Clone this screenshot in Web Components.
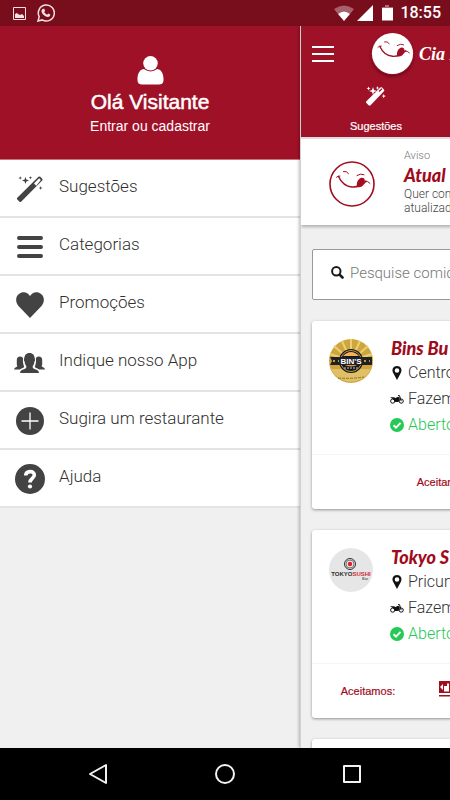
<!DOCTYPE html>
<html lang="pt-BR">
<head>
<meta charset="utf-8">
<meta name="viewport" content="width=device-width, initial-scale=1">
<title>Cia</title>
<style>
  html, body { margin: 0; height: 100%; }
  body { font-family: "Liberation Sans", Arial, sans-serif; background: #f0f0f0; overflow: hidden; }
</style>
</head>
<body>
<delivery-app></delivery-app>

<script>
const LIGHT = 'Roboto, "Liberation Sans", sans-serif';

function define(name, html) {
  const template = document.createElement('template');
  template.innerHTML = html;
  customElements.define(name, class extends HTMLElement {
    constructor() {
      super();
      this.attachShadow({ mode: 'open' }).append(template.content.cloneNode(true));
    }
  });
}

/* Vector icons; the name attribute picks one, the host sets size and colour. */
const ICONS = {
  picture: ['0 0 13 13', '<path fill="none" stroke="currentColor" d="M.5.5h12v12H.5z"/><path fill="currentColor" d="M2 11V7l2-1 1 1 2 1 2-1 2 2v2z"/>'],
  whatsapp: ['0 0 18 18', '<path fill="none" stroke="currentColor" stroke-width="1.5" d="M1 17l1.2-4.3A8 8 0 1 1 5.200 15.900z"/><path fill="currentColor" d="M6.300 4.700l1 .1.8 2.200-.9 1.100c.7 1.300 1.700 2.100 2.900 2.700l1-1.200 2.200 1c.1 1.500-1 2.500-2.400 2.500-3.600-.5-6.100-3.300-6.500-6 .1-1 .8-2.200 1.900-2.400z"/>'],
  wifi: ['0 0 20 16', '<path fill="currentColor" opacity=".35" d="M0 4Q10-3 20 4l-4 5Q10 4 4 9z"/><path fill="currentColor" d="M4 9q6-5 12 0l-6 7z"/>'],
  signal: ['0 0 16 16', '<path fill="currentColor" d="M16 0v16H0z"/>'],
  battery: ['0 0 12 16', '<path fill="currentColor" opacity=".4" d="M4 0h4v2h4v2H1V2h3z"/><path fill="currentColor" d="M1 3h11v12.500H1z"/>'],
  person: ['0 0 27 30', '<circle cx="13.500" cy="7.600" r="7.500" fill="currentColor"/><path fill="currentColor" d="M6.500 13.500q7 5 14 0C25 14 27 19 27 24.500q0 5-5 5H5q-5 0-5-5C0 19 2 14 6.500 13.500z"/>'],
  wand: ['0 0 26 26', '<path fill="currentColor" fill-rule="evenodd" d="M0 22L21.500.8q.9-.8 1.800 0l1.900 1.900q.8.9 0 1.800L4.100 25.700q-.8.700-1.600 0L.1 23.300q-.5-.6-.1-1.300zM17 7.500l2.200 2.200 4.600-5.700-1.700-1.700z"/><path fill="currentColor" d="M8.500 1l.9 2.600 2.600.9-2.600.9L8.500 8l-.9-2.600L5 4.500l2.600-.9zM3.200.2l.5 1.300 1.300.5-1.300.5-.5 1.300-.5-1.300L1.400 2l1.300-.5zM13.500 0l.4 1.300 1.300.5-1.300.5-.4 1.300-.5-1.300-1.300-.5 1.300-.5zM23.600 10l.5 1.500 1.400.5-1.400.5-.5 1.400-.5-1.400-1.400-.5 1.400-.5z"/>'],
  wandfull: ['0 0 20 20', '<path fill="currentColor" d="M.4 15.300L14.300 1.600q.9-.8 1.800 0l1.800 1.800q.8.900 0 1.800L4.600 19.300q-1 .9-2 0l-2.200-2.200q-.9-.9 0-1.800z"/><path stroke="#9f1127" stroke-width="1.200" d="M13 5.500L16 2.800"/><path fill="currentColor" d="M7 1l1 3 3 1-3 1-1 3-1-3-3-1 3-1zM2.500.5l.6 1.300 1.400.6-1.400.7-.6 1.300L2 3.100.6 2.400 2 1.800zM11.500 0l.5 1.400 1.400.5-1.400.6-.5 1.400-.5-1.400L9.600 1.900l1.400-.5zM17.700 8l.6 1.500 1.500.6-1.500.6-.6 1.500-.6-1.500-1.500-.6 1.500-.6z"/>'],
  lines: ['0 0 26 22', '<path stroke="currentColor" stroke-width="4" stroke-linecap="round" d="M2 2h22M2 11h22M2 20h22"/>'],
  bars: ['0 0 22 16', '<path stroke="currentColor" stroke-width="2" d="M0 1h22M0 8h22M0 15h22"/>'],
  heart: ['0 0 28 26', '<path fill="currentColor" d="M14 26L2.500 14C-1.500 9.500-.3 2.500 5 .7 9-.6 12 1 14 4c2-3 5-4.600 9-3.300 5.300 1.800 6.500 8.800 2.500 13.300z"/>'],
  group: ['0 0 31 20', '<path fill="currentColor" d="M6 20q.3-3 4-3.700 2.500-.8 2.500-2.500-1.700-2.300-2-5.200-.8-1-.5-2C10.500 2 12 0 15.500 0S20.500 2 21 6.600q.3 1-.5 2-.3 2.900-2 5.200 0 1.700 2.500 2.500 3.700.7 4 3.700z"/><path fill="currentColor" d="M0 16.500q.1-1.800 2.400-2.500c1.300-.4 1-1.600.4-2V7.500C2.600 5 4 3.600 6.200 3.600c1.600 0 2.600.8 2.900 2-.5 3 .1 5.600 1.100 8.400-1.200 1-3 1.200-4.200 2.500zM31 16.500q-.1-1.800-2.400-2.500c-1.300-.4-1-1.600-.4-2V7.500c.2-2.500-1.200-3.900-3.400-3.900-1.600 0-2.600.8-2.900 2 .5 3-.1 5.600-1.100 8.400 1.200 1 3 1.200 4.200 2.500z"/>'],
  plus: ['0 0 28 28', '<circle cx="14" cy="14" r="14" fill="currentColor"/><path stroke="#fff" stroke-width="1.300" d="M14 5.500v17M5.500 14h17"/>'],
  help: ['0 0 30 30', '<circle cx="15" cy="15" r="15" fill="currentColor"/><path fill="none" stroke="#fff" stroke-width="3.600" d="M10.700 11.500C11 6.500 19.300 6.300 19.300 11c0 3.500-4.300 3.500-4.300 7.500"/><circle cx="15" cy="22.500" r="2.100" fill="#fff"/>'],
  search: ['0 0 13 13', '<circle cx="5.300" cy="5.300" r="4.200" fill="none" stroke="currentColor" stroke-width="2"/><path stroke="currentColor" stroke-width="2.600" stroke-linecap="round" d="M8.800 8.800l2.700 2.700"/>'],
  pin: ['0 0 14 14', '<path fill="currentColor" fill-rule="evenodd" d="M7 14L3.500 7.500C1 3.500 3.500 0 7 0s6 3.500 3.500 7.500zM7 2.200a2.300 2.300 0 1 0 0 4.600 2.300 2.300 0 0 0 0-4.600z"/>'],
  moto: ['0 0 14 9', '<g fill="none" stroke="currentColor"><circle cx="2.700" cy="6.100" r="2.100"/><circle cx="11.200" cy="6.100" r="2.100"/><path d="M8 .6h1.500l1.700 5.500"/></g><path fill="currentColor" d="M0 2.300h4l1.500.8L8 1.800l2 1L8.500 7H4.800L3.500 4.500z"/>'],
  check: ['0 0 14 14', '<circle cx="7" cy="7" r="7" fill="currentColor"/><path fill="none" stroke="#fff" stroke-width="2" d="M3.500 7.200L6 9.600l4.600-4.700"/>'],
  back: ['0 0 20 22', '<path fill="none" stroke="currentColor" stroke-width="2" stroke-linejoin="round" d="M18 2v18L2 11z"/>'],
  home: ['0 0 20 22', '<circle cx="10" cy="11" r="9" fill="none" stroke="currentColor" stroke-width="2"/>'],
  recent: ['0 0 20 22', '<path fill="none" stroke="currentColor" stroke-width="2" stroke-linejoin="round" d="M2 3h16v16H2z"/>'],
  smile: ['0 0 46 46', '<circle cx="23" cy="23" r="22" fill="#fff" stroke="currentColor" stroke-width="var(--ring,1.600)"/><g fill="none" stroke="currentColor" stroke-linecap="round"><path d="M14.500 10.500q3-1 5 2M28 14.500q3.500-2.500 7-.8M7.500 16.200q1.500-1.500 3.500-1.200M36 20.500q3-.8 5 1.800"/><path stroke-width="1.500" d="M9.500 15.500C12 21 17 25.500 23 26q4 .3 8-1.500 4-1.800 6-4.500"/></g><path fill="currentColor" d="M28 26c-1-4 1-8.500 4.500-9.300 3.500-.4 4 3.300 2.500 6.300-1.500 2.700-4 3.800-7 3z"/>'],
  burger: ['0 0 44 44', '<circle cx="22" cy="22" r="22" fill="#d0a63c"/><g stroke="#e9cf78" stroke-width="2"><path d="M22 22V0M22 22L13 2M22 22l9-20M22 22L5 7M22 22L39 7M22 22L1 15M22 22l21-7"/></g><path fill="#dfc066" d="M2 30h40A22 22 0 0 1 2 30z"/><circle cx="22" cy="22" r="12" fill="#16171b"/><circle cx="22" cy="22" r="10.500" fill="none" stroke="#c39a3c"/><path fill="#f2b35a" d="M14 17q8-8 16 0z"/><path fill="#e09a3d" d="M14 25h16q-8 5-16 0z"/><path fill="#202126" d="M1 18h42v8H1l2-4z"/><path stroke="#c39a3c" stroke-width="2" stroke-dasharray="2 3" d="M4 22h6M35 22h6"/><path stroke="#907126" stroke-dasharray="3 1" d="M9 39q13 1 26-1" fill="none"/><text x="22" y="25" text-anchor="middle" font-family="Liberation Sans" font-size="8" font-weight="700" fill="#fff">BIN\'S</text><path stroke="#ccc" stroke-dasharray="2 1" d="M15 29h14"/>'],
  sushi: ['0 0 44 44', '<circle cx="22" cy="22" r="22" fill="#e6e6e6"/><g fill="none" stroke="#302e31"><circle cx="21" cy="16" r="5.500"/><circle cx="21" cy="16" r="4" stroke="#777"/></g><circle cx="21" cy="16" r="2.200" fill="#e02027"/><text x="22" y="28" text-anchor="middle" font-family="Liberation Sans Narrow, Liberation Sans" font-size="6" font-weight="700" fill="#302e31">TOKYO<tspan fill="#cf2834">SUSHI</tspan></text><text x="33" y="32" font-family="Liberation Sans" font-size="4" fill="#302e31">Bar</text>'],
  card: ['0 0 44 16', '<path fill="#9f0f20" d="M0 0h44v12H0zM0 14h44v1.500H0z"/><path fill="#fff" d="M1 6l3-3v6zM5 5h3V2.500h2v8H5zM14 3h6v1.500h-4V6h4v5h-6V9.500h4V8h-4zM23 3h6v8h-6zM32 3h6v8h-6z"/>']
};
customElements.define('app-icon', class extends HTMLElement {
  constructor() { super(); this.attachShadow({ mode: 'open' }); }
  connectedCallback() {
    const [box, body] = ICONS[this.getAttribute('name')];
    this.shadowRoot.innerHTML = `<style>:host{display:block;flex:none}svg{display:block;width:100%;height:100%}</style><svg viewBox="${box}" aria-hidden="true">${body}</svg>`;
  }
});

define('status-bar', `
<style>
  :host { display: flex; align-items: center; justify-content: space-between; height: 26px; padding: 0 9px 0 13px; background: #780d1c; color: #fff; }
  div { display: flex; align-items: center; }
  .left { gap: 11px; color: #f7dfe2; }
  .right { gap: 3px; font: 500 16px/26px Roboto, sans-serif; }
  .pic { width: 13px; height: 13px; } .wa { width: 18px; height: 18px; }
  .wifi { width: 20px; height: 16px; } .sig { width: 16px; height: 16px; } .bat { width: 12px; height: 16px; margin: 0 4px 0 5px; }
</style>
<div class="left"><app-icon class="pic" name="picture"></app-icon><app-icon class="wa" name="whatsapp"></app-icon></div>
<div class="right"><app-icon class="wifi" name="wifi"></app-icon><app-icon class="sig" name="signal"></app-icon><app-icon class="bat" name="battery"></app-icon><span>18:55</span></div>`);

define('menu-item', `
<style>
  :host { display: block; }
  a { display: flex; align-items: center; height: 56px; padding: 0 14px; border-bottom: 2px solid #e3e3e3; background: #fff; color: #303030; font: 300 17px/24px ${LIGHT}; text-decoration: none; }
  .icon { display: flex; justify-content: center; width: 31px; margin-right: 14px; padding-top: 2px; color: #434343; }
  .text { padding-bottom: 4px; }
</style>
<a href="#"><span class="icon"><slot name="icon"></slot></span><span class="text"><slot></slot></span></a>`);

define('side-menu', `
<style>
  :host { display: block; background: #f0f0f0; }
  header { height: 133px; border-bottom: 1px solid #c9747f; background: #9f1127; color: #fff; }
  header a { display: flex; flex-direction: column; align-items: center; padding-top: 30px; color: inherit; text-decoration: none; }
  header app-icon { width: 27px; height: 29px; }
  strong { margin-top: 4px; font: 400 21px/26px "Liberation Sans", Arial, sans-serif; -webkit-text-stroke: 0.5px; }
  small { font-size: 14px; line-height: 22px; }
  .s26 { width: 26px; height: 26px; } .lines { width: 26px; height: 22px; } .heart { width: 28px; height: 26px; }
  .group { width: 31px; height: 20px; } .plus { width: 28px; height: 28px; } .help { width: 30px; height: 30px; }
</style>
<header><a href="#"><app-icon name="person"></app-icon><strong>Olá Visitante</strong><small>Entrar ou cadastrar</small></a></header>
<nav>
  <menu-item><app-icon slot="icon" class="s26" name="wand"></app-icon>Sugestões</menu-item>
  <menu-item><app-icon slot="icon" class="lines" name="lines"></app-icon>Categorias</menu-item>
  <menu-item><app-icon slot="icon" class="heart" name="heart"></app-icon>Promoções</menu-item>
  <menu-item><app-icon slot="icon" class="group" name="group"></app-icon>Indique nosso App</menu-item>
  <menu-item><app-icon slot="icon" class="plus" name="plus"></app-icon>Sugira um restaurante</menu-item>
  <menu-item><app-icon slot="icon" class="help" name="help"></app-icon>Ajuda</menu-item>
</nav>`);

define('page-header', `
<style>
  :host { display: block; height: 111px; background: #9f1127; color: #fff; }
  .bar { display: flex; align-items: center; height: 55px; padding: 0 11px; }
  button { display: block; padding: 0; border: 0; background: none; color: inherit; }
  .bars { width: 22px; height: 16px; }
  .brand { display: flex; align-items: center; gap: 5px; margin-left: 37px; color: inherit; font: italic 700 18px/24px "Liberation Serif", serif; text-decoration: none; }
  .smile { width: 43px; height: 43px; border-radius: 50%; box-shadow: 0 2px 3px #0005; color: #9f1127; --ring: 0; }
  nav { display: grid; grid-template-columns: repeat(3, 1fr); }
  nav a { display: flex; flex-direction: column; align-items: center; gap: 13px; padding-top: 5px; color: inherit; font-size: 11px; line-height: 14px; text-decoration: none; -webkit-text-stroke: 0.2px; }
  .wand { width: 20px; height: 20px; }
</style>
<div class="bar"><button aria-label="Menu"><app-icon class="bars" name="bars"></app-icon></button>
<a class="brand" href="#"><app-icon class="smile" name="smile"></app-icon><span>Cia R</span></a></div>
<nav><a href="#"><app-icon class="wand" name="wandfull"></app-icon><span>Sugestões</span></a></nav>`);

define('notice-bar', `
<style>
  :host { display: flex; gap: 29px; height: 86px; padding: 0 28px; border-top: 2px solid #ddd; background: #fff; box-shadow: 0 2px 3px #0004; white-space: nowrap; }
  app-icon { width: 46px; height: 46px; margin-top: 22px; color: #a40d20; }
  div { padding-top: 9px; font: 300 12px/14px ${LIGHT}; color: #444; }
  small { display: block; font-size: 11px; line-height: 16px; color: #777; }
  h2 { margin: 0; font: italic 900 18px/23px Lato, sans-serif; color: #a00b1c; }
</style>
<app-icon name="smile"></app-icon>
<div><small>Aviso</small><h2>Atual</h2>Quer con<br>atualizad</div>`);

define('search-box', `
<style>
  :host { display: block; margin: 24px 11px 0; }
  label { display: flex; align-items: center; gap: 6px; height: 49px; padding: 0 18px; border: 1px solid #999; border-radius: 2px; background: #fff; color: #1b1b1b; }
  app-icon { width: 13px; height: 13px; margin-bottom: 4px; }
  input { flex: 1; min-width: 0; height: 32px; margin-bottom: 4px; padding: 0; border: 0; outline: 0; background: none; font: 300 15px/24px ${LIGHT}; }
  input::placeholder { color: #777; opacity: 1; }
</style>
<label><app-icon name="search"></app-icon><input type="text" aria-label="Pesquise" placeholder="Pesquise comid"></label>`);

define('store-card', `
<style>
  :host { display: block; margin: 21px 11px 0; border-radius: 3px; background: #fff; box-shadow: 0 1px 3px #0006; white-space: nowrap; }
  .top { display: flex; gap: 17px; height: 133px; padding: 0 17px; border-bottom: 1px solid #f5f5f5; }
  ::slotted([slot=logo]) { width: 44px; height: 44px; margin-top: 18px; }
  h2 { margin: 15px 0 0 1px; font: italic 900 18px/24px Lato, sans-serif; color: #a00b1c; }
  p { display: flex; align-items: center; gap: 4px; margin: 0; height: 26px; font: 300 16px/26px ${LIGHT}; color: #333; }
  p app-icon { width: 14px; height: 14px; color: #111; }
  p .moto { height: 9px; }
  .open, .open app-icon { color: #24c956; }
  footer { display: flex; align-items: center; justify-content: center; gap: 32px; height: 54px; }
  footer span { margin-right: 12px; font-size: 11px; color: #a00b1c; -webkit-text-stroke: 0.2px; }
</style>
<div class="top"><slot name="logo"></slot>
  <div><h2><slot name="title"></slot></h2>
  <p><app-icon name="pin"></app-icon><slot name="place"></slot></p>
  <p><app-icon class="moto" name="moto"></app-icon><span>Fazem</span></p>
  <p class="open"><app-icon name="check"></app-icon><span>Aberto</span></p></div>
</div>
<footer><span>Aceitamos:</span><slot name="pay"></slot></footer>`);

define('store-page', `
<style>
  :host { display: block; width: 100vw; }
  .pay { width: 44px; height: 16px; margin-bottom: 4px; }
</style>
<page-header></page-header>
<notice-bar></notice-bar>
<search-box></search-box>
<store-card><app-icon slot="logo" name="burger"></app-icon><span slot="title">Bins Bu</span><span slot="place">Centro</span><app-icon slot="pay" class="pay" name="card"></app-icon><app-icon slot="pay" class="pay" name="card"></app-icon></store-card>
<store-card><app-icon slot="logo" name="sushi"></app-icon><span slot="title">Tokyo S</span><span slot="place">Pricum</span><app-icon slot="pay" class="pay" name="card"></app-icon><app-icon slot="pay" class="pay" name="card"></app-icon><app-icon slot="pay" class="pay" name="card"></app-icon><app-icon slot="pay" class="pay" name="card"></app-icon></store-card>
<store-card></store-card>`);

define('nav-bar', `
<style>
  :host { display: flex; align-items: center; justify-content: center; gap: 107px; height: 52px; background: #000; color: #f2f2f2; }
  button { padding: 0; border: 0; background: none; color: inherit; }
  app-icon { width: 20px; height: 22px; }
</style>
<button aria-label="Voltar"><app-icon name="back"></app-icon></button>
<button aria-label="Início"><app-icon name="home"></app-icon></button>
<button aria-label="Recentes"><app-icon name="recent"></app-icon></button>`);

define('delivery-app', `
<style>
  :host { display: flex; flex-direction: column; height: 100vh; }
  main { display: flex; flex: 1; min-height: 0; overflow: hidden; }
  side-menu { flex: 0 0 300px; }
  .content { flex: 1; min-width: 0; overflow: hidden; background: #f0f0f0; border-left: 1px solid #0002; box-shadow: -1px 0 3px #0004; }
</style>
<status-bar></status-bar>
<main><side-menu></side-menu><div class="content"><store-page></store-page></div></main>
<nav-bar></nav-bar>`);
</script>
</body>
</html>
